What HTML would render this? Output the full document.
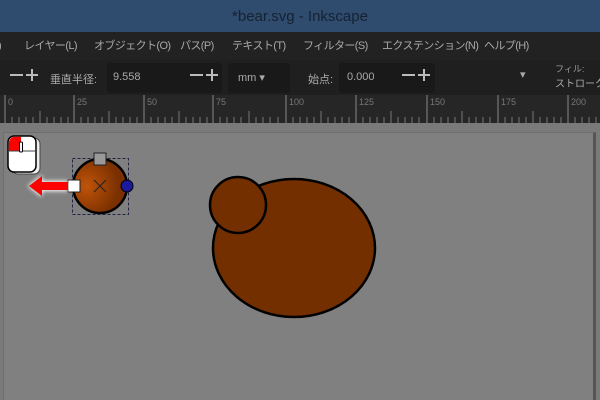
<!DOCTYPE html>
<html><head><meta charset="utf-8"><style>
*{margin:0;padding:0;box-sizing:border-box}
body{width:600px;height:400px;overflow:hidden;background:#7a7a7a;font-family:"Liberation Sans","Noto Sans CJK JP",sans-serif;position:relative}
.title{position:absolute;left:0;top:0;width:600px;height:32px;background:#2f4b6d;color:#162234;font-size:15px;text-align:center;line-height:34px}
.menu{position:absolute;top:32px;left:0;width:600px;height:28px;background:#222;color:#a8a8a8;font-size:11px;line-height:28px;white-space:nowrap;letter-spacing:-0.6px}
.menu span{position:absolute}
.tb{position:absolute;top:60px;left:0;width:600px;height:35px;background:#1f1f1f;color:#aaa;font-size:11px}
.tb .f{position:absolute;background:#191919;border-radius:3px;height:30px;top:3px}
.tb span{position:absolute;white-space:nowrap}
.ruler{position:absolute;top:95px;left:0;width:600px;height:28px;background:#262626}
.ruler span{position:absolute;top:2px;font-size:9px;color:#777}
</style></head><body>
<div class="title">*bear.svg - Inkscape</div>
<div class="menu">
<span style="left:-2px">)</span><span style="left:24px">レイヤー(L)</span><span style="left:94px">オブジェクト(O)</span><span style="left:180px">パス(P)</span><span style="left:232px">テキスト(T)</span><span style="left:303px">フィルター(S)</span><span style="left:382px">エクステンション(N)</span><span style="left:484px">ヘルプ(H)</span>
</div>
<div class="tb">
<span style="left:50px;top:11px">垂直半径:</span>
<div class="f" style="left:107px;width:115px"></div>
<span style="left:113px;top:11px">9.558</span>
<div class="f" style="left:228px;width:62px"></div>
<span style="left:238px;top:11px">mm ▾</span>
<span style="left:308px;top:11px">始点:</span>
<div class="f" style="left:339px;width:96px"></div>
<span style="left:347px;top:11px">0.000</span>
<span style="left:520px;top:8px;color:#aaa">▾</span>
<span style="left:555px;top:2px;font-size:9px;color:#999">フィル:</span>
<span style="left:555px;top:15px;font-size:10px;color:#aaa">ストローク:</span>
<svg width="600" height="35" style="position:absolute;left:0;top:0">
<g stroke="#bbb" stroke-width="2">
<path d="M10 15h13M26 15h12M32 9v12"/>
<path d="M190 15h13M206 15h12M212 9v12"/>
<path d="M402 15h13M418 15h12M424 9v12"/>
</g>
</svg>
</div>
<div class="ruler">
<svg width="600" height="28" style="position:absolute;left:0;top:0">
<path d="M5 0V28M74 0V28M144 0V28M213 0V28M286 0V28M356 0V28M427 0V28M498 0V28M568 0V28" stroke="#888"/>
<path d="M12 22V28M19 22V28M26 22V28M33 22V28M40 16V28M47 22V28M54 22V28M61 22V28M68 22V28M81 22V28M88 22V28M95 22V28M102 22V28M109 16V28M116 22V28M123 22V28M130 22V28M137 22V28M151 22V28M158 22V28M165 22V28M172 22V28M179 16V28M186 22V28M193 22V28M200 22V28M207 22V28M220 22V28M227 22V28M234 22V28M241 22V28M249 16V28M256 22V28M263 22V28M270 22V28M278 22V28M293 22V28M300 22V28M307 22V28M314 22V28M321 16V28M328 22V28M335 22V28M342 22V28M349 22V28M363 22V28M370 22V28M377 22V28M384 22V28M391 16V28M398 22V28M405 22V28M412 22V28M419 22V28M434 22V28M441 22V28M448 22V28M455 22V28M462 16V28M469 22V28M476 22V28M483 22V28M490 22V28M505 22V28M512 22V28M519 22V28M526 22V28M533 16V28M540 22V28M547 22V28M554 22V28M561 22V28M575 22V28M582 22V28M589 22V28M596 22V28" stroke="#777"/>
</svg>
<span style="left:8px">0</span><span style="left:77px">25</span><span style="left:147px">50</span><span style="left:216px">75</span><span style="left:289px">100</span><span style="left:359px">125</span><span style="left:430px">150</span><span style="left:501px">175</span><span style="left:571px">200</span>
</div>
<div style="position:absolute;left:3px;top:132px;width:593px;height:268px;background:#808080;border-left:1px solid #6e6e6e;border-top:1px solid #6e6e6e;border-right:3px solid #555"></div>
<svg width="600" height="400" style="position:absolute;left:0;top:0">
<defs><radialGradient id="g" cx="0.25" cy="0.5" r="0.6"><stop offset="0" stop-color="#c0540a"/><stop offset="1" stop-color="#7a3000"/></radialGradient>
<filter id="gl"><feGaussianBlur stdDeviation="2"/></filter></defs>
<ellipse cx="294" cy="248" rx="81" ry="69" fill="#732f00" stroke="#000" stroke-width="2.5"/>
<circle cx="238" cy="205" r="28" fill="#732f00" stroke="#000" stroke-width="2.5"/>
<circle cx="100" cy="186" r="27" fill="url(#g)" stroke="#000" stroke-width="2.5"/>
<rect x="72.5" y="158.5" width="56" height="56" fill="none" stroke="#224" stroke-dasharray="3,2" stroke-width="1"/>
<path d="M94 180l12 12M106 180l-12 12" stroke="#222" stroke-width="1"/>
<rect x="94" y="153" width="12" height="12" fill="#999" stroke="#222"/>
<rect x="68" y="180" width="12" height="12" fill="#fff" stroke="#222"/>
<circle cx="127" cy="186" r="6" fill="#1a1a9a" stroke="#000"/>
<path d="M28 186l14-11v6h26v10h-26v6z" fill="#fff" filter="url(#gl)"/>
<path d="M29 186l13-10v6h26v8h-26v6z" fill="#f00"/>
<rect x="12" y="138" width="28" height="36" rx="6" fill="#eee" stroke="#444"/>
<rect x="8" y="136" width="28" height="36" rx="6" fill="#fff" stroke="#000" stroke-width="1.5"/>
<path d="M14 136.8h7v14h-12.2v-8a6 6 0 0 1 5.2-6z" fill="#f00"/>
<path d="M9 151h26" stroke="#444"/>
<rect x="19.5" y="142" width="3" height="10" rx="1" fill="#fff" stroke="#000"/>
</svg>
</body></html>
